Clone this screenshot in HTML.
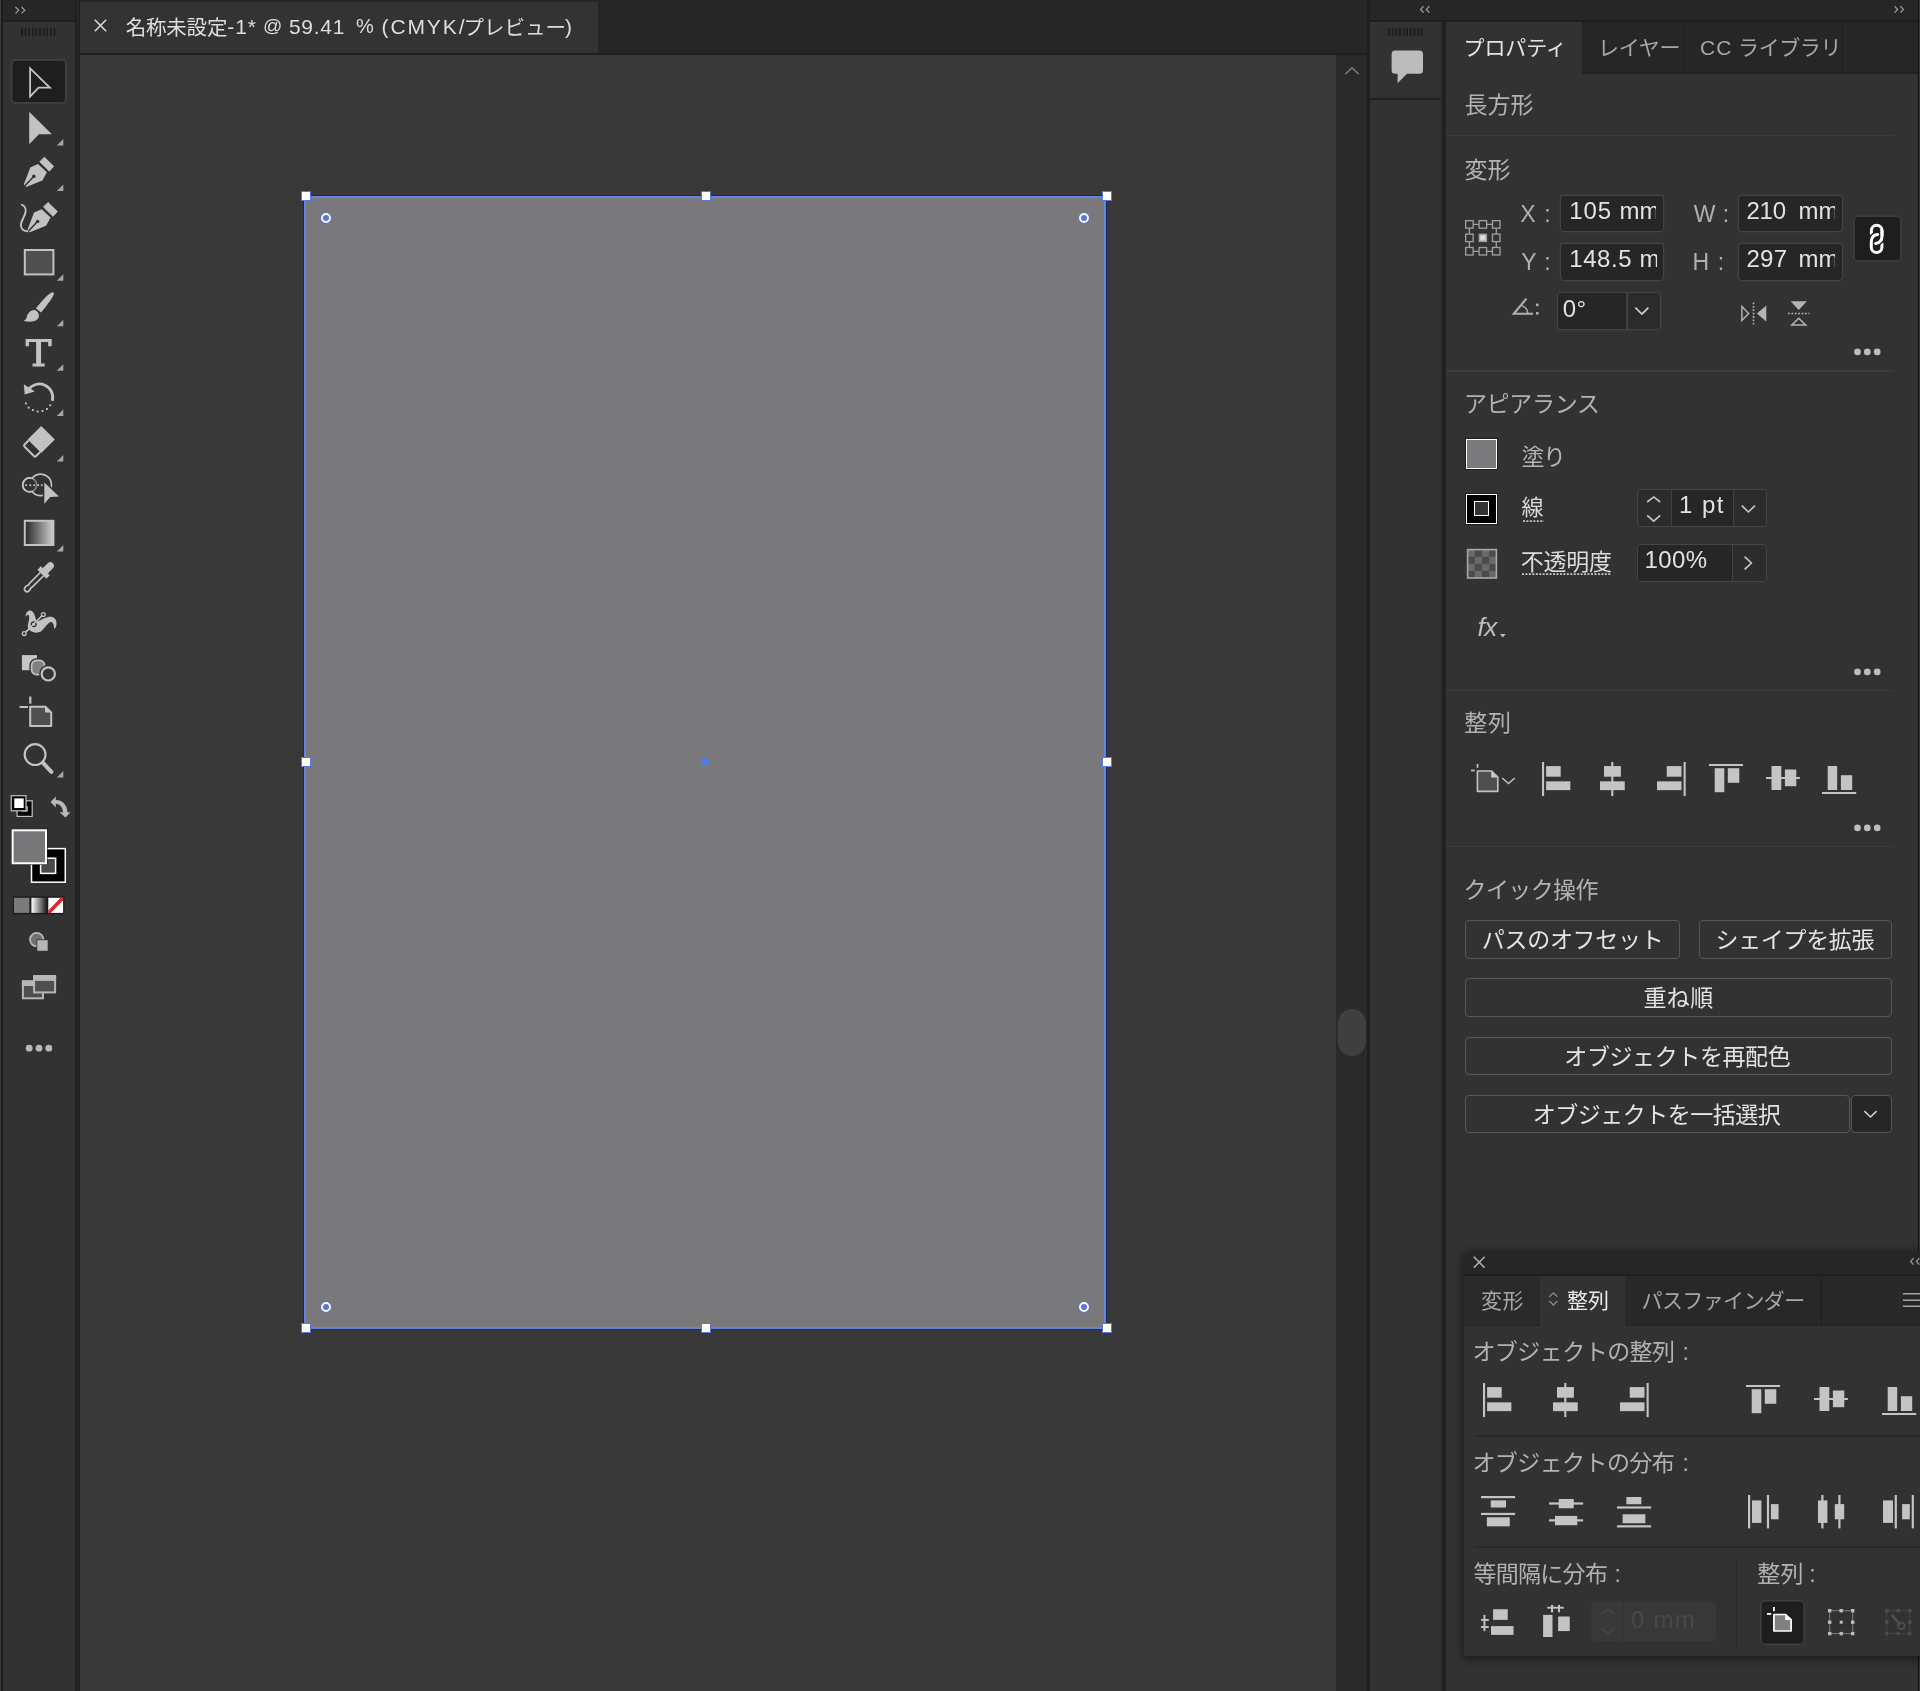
<!DOCTYPE html>
<html lang="ja">
<head>
<meta charset="utf-8">
<title>Illustrator</title>
<style>
*{box-sizing:border-box;margin:0;padding:0}
html,body{width:1920px;height:1691px;overflow:hidden;background:#323232}
body{position:relative;font-family:"Liberation Sans","Noto Sans CJK JP",sans-serif;color:#b4b4b4;-webkit-font-smoothing:antialiased}
.a{position:absolute}
.t{position:absolute;white-space:nowrap;line-height:1}
svg{position:absolute;overflow:visible}
/* ---------- frame ---------- */
#edgeL0{left:0;top:0;width:1px;height:1691px;background:#3b3b3b}
#edgeL1{left:1px;top:0;width:2px;height:1691px;background:#1d1d1d}
#tbHead{left:3px;top:0;width:72px;height:20px;background:#262626}
#tbHeadLine{left:3px;top:20px;width:72px;height:2px;background:#1f1f1f}
#tbBody{left:3px;top:22px;width:72px;height:1669px;background:#323232}
#tbBand{left:75px;top:0;width:5px;height:1691px;background:#292929}
#tbBandLine{left:75px;top:0;width:5px;height:1691px;background:linear-gradient(90deg,#212121 0 1.7px,#2a2a2a 1.7px 3.3px,#222 3.3px 5px)}
#docBar{left:80px;top:0;width:1287px;height:53px;background:#262626}
#docTab{left:80px;top:2px;width:518px;height:51px;background:#333333}
#docBarLine{left:80px;top:53px;width:1287px;height:2px;background:#202020}
#canvas{left:80px;top:55px;width:1256px;height:1636px;background:#383838}
#vscroll{left:1336px;top:55px;width:31px;height:1636px;background:#2a2a2a}
#vthumb{left:1338px;top:1009px;width:28px;height:47px;border-radius:14px;background:#3f3f3f}
#sepR{left:1367px;top:0;width:3px;height:1691px;background:#1f1f1f}
#rHead{left:1370px;top:0;width:548px;height:20px;background:#262626}
#rHeadLine{left:1370px;top:20px;width:548px;height:2px;background:#1f1f1f}
#dock{left:1370px;top:22px;width:71px;height:1669px;background:#323232}
#dockLine{left:1370px;top:98px;width:71px;height:2px;background:#222222}
#dockBand{left:1441px;top:22px;width:5px;height:1669px;background:#262626}
#dockBandLine{left:1443px;top:22px;width:2px;height:1669px;background:#1f1f1f}
#prop{left:1446px;top:22px;width:472px;height:1669px;background:#323232}
#propTabs{left:1446px;top:22px;width:472px;height:51px;background:#262626}
#edgeR0{left:1918px;top:0;width:1px;height:1691px;background:#121212}
#edgeR1{left:1919px;top:0;width:1px;height:1691px;background:#3b3b3b}
.dt{color:#dedede}
.hd{width:10px;height:10px;background:#fff;border:1px solid #5a78dc}
.cw{width:10px;height:10px;border-radius:50%;border:2.3px solid #f4f8ff;background:#5b76d8;box-shadow:0 0 0 1px rgba(90,115,215,.55)}
.sh{font-size:23px;color:#b2b2b2}
.lb{font-size:23px;color:#b0b0b0}
.hr{left:1446px;width:448px;height:1.6px;background:#3b3b3b}
.fld{background:#262626;border:1px solid #444;border-radius:4px;overflow:hidden;box-shadow:0 0 0 .5px #3a3a3a}
.clip{overflow:hidden}
.fv{font-size:24px;color:#e2e2e2;letter-spacing:.9px}
.more{fill:#bdbdbd}
#root{position:absolute;left:0;top:0;width:1920px;height:1691px;will-change:transform}
.dot{height:1.6px;background:repeating-linear-gradient(90deg,#bdbdbd 0 1.7px,transparent 1.7px 3.3px)}
.btn{border:1.3px solid #575757;border-radius:4px}
.bt{font-size:23px;color:#e4e4e4}
#fpShadow{left:1463.75px;top:1250.6px;width:470px;height:405.5px;border-radius:6px 0 0 0;box-shadow:0 2px 9px 1px rgba(0,0,0,.5)}
#fp{left:1463.75px;top:1250.6px;width:456.25px;height:405.5px;background:#323232;border-radius:6px 0 0 0;overflow:hidden}
.fl{font-size:23px;color:#b2b2b2}
.fhr{height:1.5px;background:#2a2a2a}
</style>
</head>
<body>
<div id="root">
<!-- frame -->
<div class="a" id="edgeL0"></div><div class="a" id="edgeL1"></div>
<div class="a" id="tbHead"></div><div class="a" id="tbHeadLine"></div><div class="a" id="tbBody"></div>
<div class="a" id="tbBand"></div><div class="a" id="tbBandLine"></div>
<div class="a" id="docBar"></div><div class="a" id="docTab"></div><div class="a" id="docBarLine"></div>
<div class="a" id="canvas"></div>
<div class="a" id="vscroll"></div><div class="a" id="vthumb"></div>
<div class="a" id="sepR"></div>
<div class="a" id="rHead"></div><div class="a" id="rHeadLine"></div>
<div class="a" id="dock"></div><div class="a" id="dockLine"></div>
<div class="a" id="dockBand"></div><div class="a" id="dockBandLine"></div>
<div class="a" id="prop"></div><div class="a" id="propTabs"></div>
<div class="a" id="edgeR0"></div><div class="a" id="edgeR1"></div>

<!-- DOC-TAB -->
<svg style="left:94px;top:19px" width="13" height="13" viewBox="0 0 13 13"><path d="M0.8 0.8L12.2 12.2M12.2 0.8L0.8 12.2" stroke="#d6d6d6" stroke-width="1.6" fill="none"/></svg>
<div class="t dt" style="left:125.7px;top:18px;font-size:20.5px;letter-spacing:-0.2px">名称未設定</div>
<div class="t dt" style="left:227.3px;top:16px;font-size:21px;letter-spacing:.85px">-1*</div>
<div class="t dt" style="left:263px;top:16px;font-size:19px">@</div>
<div class="t dt" style="left:288.9px;top:16px;font-size:21px;letter-spacing:.75px">59.41</div>
<div class="t dt" style="left:356px;top:16px;font-size:20px">%</div>
<div class="t dt" style="left:381.5px;top:16px;font-size:21px;letter-spacing:1.9px">(CMYK/</div>
<div class="t dt" style="left:463.6px;top:18px;font-size:20.5px">プレビュー</div>
<div class="t dt" style="left:565px;top:16px;font-size:21px">)</div>
<!-- ARTBOARD -->
<div class="a" style="left:303px;top:195px;width:804px;height:1135px;background:#1c2a52"></div>
<div class="a" style="left:304px;top:196px;width:802px;height:1133px;background:#6584e2"></div>
<div class="a" style="left:306px;top:198px;width:798px;height:1129px;background:#79797b"></div>
<div class="a hd" style="left:301px;top:191px"></div><div class="a hd" style="left:701px;top:191px"></div><div class="a hd" style="left:1101.5px;top:191px"></div>
<div class="a hd" style="left:301px;top:757px"></div><div class="a hd" style="left:1101.8px;top:757px"></div>
<div class="a hd" style="left:301px;top:1323px"></div><div class="a hd" style="left:701px;top:1323px"></div><div class="a hd" style="left:1101.5px;top:1323px"></div>
<div class="a cw" style="left:321px;top:213px"></div><div class="a cw" style="left:1079px;top:213px"></div>
<div class="a cw" style="left:321px;top:1302px"></div><div class="a cw" style="left:1079px;top:1302px"></div>
<div class="a" style="left:701px;top:758px;width:8px;height:8px;border-radius:50%;background:#4f7fe6"></div>
<!-- TOOLBAR -->
<svg style="left:0;top:0" width="80" height="1100" viewBox="0 0 80 1100">
<defs>
<linearGradient id="gGrad" x1="0" x2="1" y1="0" y2="0"><stop offset="0" stop-color="#262626"/><stop offset="1" stop-color="#cfcfcf"/></linearGradient>
<linearGradient id="gGrad2" x1="0" x2="1" y1="0" y2="0"><stop offset="0" stop-color="#ffffff"/><stop offset="1" stop-color="#1a1a1a"/></linearGradient>
<path id="tri" d="M0 0V-6.5L-6.5 0Z" fill="#a6a6a6"/>
<g id="pen">
<path d="M23.8 184.6L30.3 167.4L37.9 164L46.9 172.2L42.4 180.6L26.1 187.1Z" fill="#c2c2c2"/>
<path d="M24.7 186L33.7 176.4" stroke="#323232" stroke-width="1.5" fill="none"/>
<circle cx="33.9" cy="176.2" r="1.7" fill="#323232"/>
<path d="M44.3 157.3L53.6 166.3L49.4 171.1L39.8 161.8Z" fill="#c2c2c2" stroke="#c2c2c2" stroke-width="1" stroke-linejoin="round"/>
</g>
</defs>
<!-- collapse chevrons -->
<path d="M15.5 7L18.8 10.2L15.5 13.4M21.5 7L24.8 10.2L21.5 13.4" stroke="#9a9a9a" stroke-width="1.3" fill="none"/>
<!-- grip -->
<g fill="#1f1f1f"><rect x="21" y="28" width="2" height="8"/><rect x="24.6" y="28" width="2" height="8"/><rect x="28.2" y="28" width="2" height="8"/><rect x="31.8" y="28" width="2" height="8"/><rect x="35.4" y="28" width="2" height="8"/><rect x="39" y="28" width="2" height="8"/><rect x="42.6" y="28" width="2" height="8"/><rect x="46.2" y="28" width="2" height="8"/><rect x="49.8" y="28" width="2" height="8"/><rect x="53.4" y="28" width="2" height="8"/></g>
<!-- selected tool box -->
<rect x="11.5" y="60" width="54.5" height="43" rx="4" fill="#1e1e1e" stroke="#3e3e3e" stroke-width="2"/>
<!-- selection tool -->
<path d="M30.1 68.4L49.8 87.6L38.6 87.6L30.1 96.4Z" fill="none" stroke="#c4c4c4" stroke-width="1.8" stroke-linejoin="miter"/>
<!-- direct selection -->
<path d="M29.2 111.7L51.9 134.2L39 134.2L29.2 144.3Z" fill="#c2c2c2"/>
<use href="#tri" x="63.3" y="145.4"/>
<!-- pen -->
<use href="#pen"/>
<use href="#tri" x="63.3" y="191"/>
<!-- curvature -->
<use href="#pen" x="3.7" y="45.2"/>
<path d="M21.9 204.8C24 205.5 26.2 208 25.6 212C24.8 217 20.5 221 20.9 225.5C21.3 229.5 24.5 231 27.3 231.3" fill="none" stroke="#c2c2c2" stroke-width="1.9" stroke-linecap="round"/>
<!-- rectangle -->
<rect x="24.8" y="250" width="28.6" height="24.4" fill="#4f4f4f" stroke="#c2c2c2" stroke-width="2"/>
<use href="#tri" x="63.3" y="280.7"/>
<!-- brush -->
<path d="M53.3 292.2C55 293.4 52.8 298.4 41 312.5L35.9 308.3C44.3 297.3 51.1 291.7 53.3 292.2Z" fill="#c2c2c2"/>
<path d="M34.8 309.9C37.6 310.8 39.8 314.2 38.7 317.5C37 321.5 30.3 322.6 23.8 320.9C27.5 318.7 26.3 315.8 28.6 313C30.3 310.8 32.5 309.7 34.8 309.9Z" fill="#c2c2c2"/>
<use href="#tri" x="63.3" y="326.3"/>
<!-- type -->
<text x="38.7" y="365.7" text-anchor="middle" font-family="'DejaVu Serif','Liberation Serif',serif" font-size="36.4" fill="#c2c2c2" stroke="#c2c2c2" stroke-width="1" transform="translate(38.7 0) scale(1.06 1) translate(-38.7 0)" style="text-rendering:geometricPrecision">T</text>
<use href="#tri" x="63.3" y="370.7"/>
<!-- rotate -->
<path d="M28.3 389.8A13.4 13.4 0 0 1 52.3 400.8" fill="none" stroke="#c2c2c2" stroke-width="2.8"/>
<path d="M23.8 384.2L24.7 394.6L34.8 391.5Z" fill="#c2c2c2"/>
<g fill="#c2c2c2"><rect x="24.9" y="402.4" width="1.9" height="1.9"/><rect x="27.7" y="406.6" width="1.9" height="1.9"/><rect x="31.9" y="409.1" width="1.9" height="1.9"/><rect x="36.7" y="410.6" width="1.9" height="1.9"/><rect x="41.5" y="410" width="1.9" height="1.9"/><rect x="46" y="408" width="1.9" height="1.9"/><rect x="49.3" y="404.4" width="1.9" height="1.9"/></g>
<use href="#tri" x="63.3" y="416"/>
<!-- eraser -->
<g transform="translate(41.25 439.5) rotate(45)">
<rect x="-9.6" y="-9.6" width="19.2" height="19.2" fill="#c2c2c2"/>
<path d="M-8.3 9.6V15.3A1.6 1.6 0 0 0 -6.7 16.9H6.5A1.6 1.6 0 0 0 8.1 15.3V9.6" fill="none" stroke="#c2c2c2" stroke-width="2"/>
</g>
<use href="#tri" x="63.3" y="461.6"/>
<!-- shape builder -->
<circle cx="29.7" cy="484.9" r="7" fill="none" stroke="#808080" stroke-width="1.7"/>
<path d="M32.1 478.3A10.8 10.8 0 1 1 32.1 491.5A7 7 0 1 1 32.1 478.3Z" fill="none" stroke="#c2c2c2" stroke-width="1.7"/>
<g fill="#c2c2c2"><rect x="25.2" y="484.3" width="1.8" height="1.8"/><rect x="29.4" y="484.3" width="1.8" height="1.8"/><rect x="33.3" y="484.3" width="1.8" height="1.8"/><rect x="37.2" y="484.3" width="1.8" height="1.8"/><rect x="40.9" y="484.3" width="1.8" height="1.8"/></g>
<path d="M44.3 482.4L58.9 496.6L50.3 497L44.3 503.7Z" fill="#c2c2c2" stroke="#323232" stroke-width="3" paint-order="stroke" stroke-linejoin="miter"/>
<!-- gradient -->
<rect x="24.8" y="520.8" width="28.6" height="24.2" fill="url(#gGrad)" stroke="#c2c2c2" stroke-width="2"/>
<use href="#tri" x="63.3" y="551.6"/>
<!-- eyedropper -->
<g transform="translate(24.5 591.6) rotate(-45)">
<path d="M24.7 -2.3L10 -2.3C9 -2.3 8.5 -1.9 7.6 -1.9C6.5 -1.9 6 -2.7 3.7 -2.7A2.7 2.7 0 0 0 3.7 2.7C6 2.7 6.5 1.9 7.6 1.9C8.5 1.9 9 2.3 10 2.3L24.7 2.3" fill="none" stroke="#c2c2c2" stroke-width="1.7"/>
<rect x="24.6" y="-6.3" width="4.8" height="12.6" fill="#c2c2c2"/>
<path d="M29 -3.6H36.5A3.6 3.6 0 0 1 36.5 3.6H29Z" fill="#c2c2c2"/>
</g>
<!-- width tool -->
<path d="M25.5 616.5C25.8 612 28.6 609.7 31.4 610.8C34.2 612.2 35.3 617 36.5 621.5C39.5 621 45.5 616.9 48.5 616.9C53.5 616 56.3 619 56.5 623C56.6 625.5 55.9 627.5 55 628.6L54 628.4C54.2 625 53 622 51 622C48.5 622 46 626.5 41 631.5C36 634 30.5 632 28.6 629C26.5 625.5 29.5 621 29.2 617C28.9 614.5 27.3 614.3 26.5 615.8Z" fill="#c2c2c2"/>
<path d="M24.4 633.4L43.2 614.6" stroke="#c2c2c2" stroke-width="1.3" fill="none"/>
<circle cx="33.7" cy="624.2" r="2.4" fill="none" stroke="#323232" stroke-width="1.3"/>
<path d="M25.6 632.2L42 615.8" stroke="#c2c2c2" stroke-width="1.3" fill="none"/>
<circle cx="24.2" cy="633.6" r="1.9" fill="#323232" stroke="#c2c2c2" stroke-width="1.3"/>
<circle cx="43.3" cy="614.5" r="1.9" fill="#323232" stroke="#c2c2c2" stroke-width="1.3"/>
<!-- blend -->
<rect x="21.9" y="655.1" width="15.1" height="15.1" fill="#c6c6c6"/>
<rect x="31.6" y="660.4" width="13" height="14.2" rx="5" fill="#808080" stroke="#323232" stroke-width="4.4"/>
<rect x="31.6" y="660.4" width="13" height="14.2" rx="5" fill="#808080" stroke="#c2c2c2" stroke-width="1.7"/>
<circle cx="48.3" cy="673.9" r="6.6" fill="#323232" stroke="#323232" stroke-width="5"/>
<circle cx="48.3" cy="673.9" r="6.6" fill="#353535" stroke="#c2c2c2" stroke-width="2.2"/>
<!-- artboard -->
<rect x="29.2" y="696.5" width="2.2" height="7.2" fill="#c2c2c2"/><rect x="19.6" y="706" width="8.4" height="2" fill="#c2c2c2"/>
<path d="M30.2 706.7H45.4L51.2 712.4V726.1H30.2Z" fill="#4f4f4f" stroke="#c2c2c2" stroke-width="2" stroke-linejoin="round"/>
<path d="M45 706.7V712.6H51.2Z" fill="#c6c6c6"/>
<!-- zoom -->
<circle cx="35.1" cy="754.6" r="10.4" fill="none" stroke="#c2c2c2" stroke-width="2.2"/>
<path d="M43 762.8L51.4 771.8" stroke="#c2c2c2" stroke-width="4" stroke-linecap="round" fill="none"/>
<use href="#tri" x="63.3" y="777.5"/>
<!-- default fill/stroke -->
<rect x="17.1" y="800.8" width="15.1" height="15.6" fill="#000" stroke="#c2c2c2" stroke-width="1.2"/>
<rect x="22.2" y="806.8" width="5" height="4.2" fill="none" stroke="#c2c2c2" stroke-width="1.2"/>
<rect x="11.2" y="795.7" width="14.8" height="15.1" fill="#000" stroke="#c2c2c2" stroke-width="1.2"/>
<rect x="14.3" y="798.4" width="9.4" height="9.6" fill="#fff"/>
<!-- swap -->
<path d="M50.5 801.9L55.8 796.5V800.1C62 800.1 67.2 804.5 67.4 812.2H70.4L65.5 817.6L59.5 812.2H63C62.8 807.5 60 804 55.8 803.8V807.5Z" fill="#b8b8b8"/>
<!-- stroke swatch -->
<rect x="31.5" y="848.6" width="33.8" height="33.6" fill="#000" stroke="#fff" stroke-width="1.5"/>
<rect x="40.6" y="858.2" width="15" height="15.2" fill="#4a4a4a" stroke="#fff" stroke-width="1.5"/>
<!-- fill swatch -->
<rect x="11.2" y="828.9" width="36.2" height="35.8" fill="#1a1a1a"/>
<rect x="12.6" y="830.3" width="33.4" height="33" fill="#777779" stroke="#fff" stroke-width="2"/>
<!-- color / gradient / none -->
<rect x="12.9" y="896.3" width="51.4" height="18" fill="#1c1c1c"/>
<rect x="14" y="897.8" width="15.4" height="15.1" fill="#7b7b7b"/>
<rect x="31.4" y="897.8" width="15.5" height="15.1" fill="url(#gGrad2)"/>
<rect x="48.3" y="897.8" width="14.8" height="15.1" fill="#fff"/>
<path d="M48.3 912.9V910.4L60.6 897.8H63.1V900.3L50.8 912.9Z" fill="#e0222c"/>
<!-- draw mode -->
<circle cx="36.7" cy="939.6" r="6.7" fill="#707070" stroke="#b8b8b8" stroke-width="1.8"/>
<rect x="37.3" y="940.2" width="10.4" height="10.6" fill="#b6b6b6" stroke="#323232" stroke-width="1.6" paint-order="stroke"/>
<!-- screen mode -->
<rect x="22.9" y="981.4" width="20.1" height="16.9" fill="#4f4f4f" stroke="#b6b6b6" stroke-width="2"/><rect x="21.9" y="980.4" width="22.1" height="5.6" fill="#b6b6b6"/>
<rect x="34.1" y="976.1" width="21" height="16.3" fill="#4f4f4f" stroke="#b6b6b6" stroke-width="2"/><rect x="33.1" y="975.1" width="23" height="5.8" fill="#b6b6b6"/>
<!-- more -->
<circle cx="29.2" cy="1048.2" r="3.4" fill="#b8b8b8"/><circle cx="39" cy="1048.2" r="3.4" fill="#b8b8b8"/><circle cx="48.8" cy="1048.2" r="3.4" fill="#b8b8b8"/>
</svg>
<!-- DOCK -->
<svg style="left:1386px;top:26px" width="40" height="12" viewBox="0 0 40 12"><g fill="#1f1f1f"><rect x="2.2" y="2" width="1.9" height="8"/><rect x="5.8" y="2" width="1.9" height="8"/><rect x="9.4" y="2" width="1.9" height="8"/><rect x="13" y="2" width="1.9" height="8"/><rect x="16.6" y="2" width="1.9" height="8"/><rect x="20.2" y="2" width="1.9" height="8"/><rect x="23.8" y="2" width="1.9" height="8"/><rect x="27.4" y="2" width="1.9" height="8"/><rect x="31" y="2" width="1.9" height="8"/><rect x="34.6" y="2" width="1.9" height="8"/></g></svg>
<svg style="left:1390px;top:49px" width="36" height="36" viewBox="0 0 36 36"><path d="M5.2 1.6H29.4A3.6 3.6 0 0 1 33 5.2V21.2A3.6 3.6 0 0 1 29.4 24.8H17L7.6 34.2V24.8H5.2A3.6 3.6 0 0 1 1.6 21.2V5.2A3.6 3.6 0 0 1 5.2 1.6Z" fill="#bcbcbc"/></svg>
<svg style="left:1344px;top:66px" width="16" height="10" viewBox="0 0 16 10"><path d="M1.2 8.2L8 1.8L14.8 8.2" fill="none" stroke="#7c7c7c" stroke-width="1.5"/></svg>
<!-- PROPERTIES -->
<div class="a" style="left:1446px;top:22px;width:136px;height:52px;background:#323232"></div>
<div class="a" style="left:1683px;top:22px;width:1px;height:50px;background:#1f1f1f"></div>
<div class="a" style="left:1842px;top:22px;width:1px;height:50px;background:#1f1f1f"></div>
<div class="a" style="left:1582px;top:72px;width:336px;height:1.5px;background:#222"></div>
<div class="t" style="left:1463.6px;top:36.7px;font-size:21px;letter-spacing:-.15px;color:#e4e4e4">プロパティ</div>
<div class="t" style="left:1597.9px;top:36.5px;font-size:21px;letter-spacing:-.23px;color:#a6a6a6">レイヤー</div>
<div class="t" style="left:1700px;top:36.5px;font-size:21px;letter-spacing:1px;color:#a6a6a6">CC</div>
<div class="t" style="left:1738.1px;top:36.5px;font-size:21px;letter-spacing:-.42px;color:#a6a6a6">ライブラリ</div>
<!-- header chevrons -->
<svg style="left:1418px;top:4px" width="16" height="12" viewBox="0 0 16 12"><path d="M5.6 2.2L2.6 5.4L5.6 8.6M11.4 2.2L8.4 5.4L11.4 8.6" stroke="#9a9a9a" stroke-width="1.3" fill="none"/></svg>
<svg style="left:1892px;top:4px" width="16" height="12" viewBox="0 0 16 12"><path d="M2.6 2.2L5.6 5.4L2.6 8.6M8.4 2.2L11.4 5.4L8.4 8.6" stroke="#9a9a9a" stroke-width="1.3" fill="none"/></svg>
<!-- section: shape -->
<div class="t sh" style="left:1464.6px;top:93.8px">長方形</div>
<div class="a hr" style="top:134.8px"></div>
<!-- section: transform -->
<div class="t sh" style="left:1464.6px;top:158.9px;letter-spacing:-.2px">変形</div>
<svg style="left:1464px;top:219px" width="38" height="38" viewBox="0 0 38 38"><g fill="none" stroke="#a2a2a2" stroke-width="1.3"><path d="M9.4 5.4H14.6M22.8 5.4H28M9.4 32.3H14.6M22.8 32.3H28M5.4 9.4V14.8M5.4 23V28.3M32.3 9.4V14.8M32.3 23V28.3"/><rect x="1.65" y="1.65" width="7.5" height="7.5"/><rect x="15.1" y="1.65" width="7.5" height="7.5"/><rect x="28.5" y="1.65" width="7.5" height="7.5"/><rect x="1.65" y="15.1" width="7.5" height="7.5"/><rect x="28.5" y="15.1" width="7.5" height="7.5"/><rect x="1.65" y="28.5" width="7.5" height="7.5"/><rect x="15.1" y="28.5" width="7.5" height="7.5"/><rect x="28.5" y="28.5" width="7.5" height="7.5"/></g><rect x="14.6" y="14.6" width="8.5" height="8.5" fill="#a2a2a2"/><rect x="16.2" y="16.2" width="5.3" height="5.3" fill="#dcdcdc"/></svg>
<div class="t lb" style="left:1520.2px;top:203px;letter-spacing:1.6px">X</div><div class="t lb" style="left:1544.3px;top:203px">:</div>
<div class="t lb" style="left:1521.2px;top:250.6px">Y</div><div class="t lb" style="left:1544.3px;top:250.6px">:</div>
<div class="t lb" style="left:1693.8px;top:203px;letter-spacing:-1.3px">W</div><div class="t lb" style="left:1722.8px;top:203px">:</div>
<div class="t lb" style="left:1692.4px;top:250.6px;letter-spacing:2px">H</div><div class="t lb" style="left:1717.8px;top:250.6px">:</div>
<div class="a fld" style="left:1560px;top:194.5px;width:104px;height:37.5px"><div class="a clip" style="left:0;top:0;width:94.5px;height:35.5px"><div class="t fv" style="left:8.2px;top:3.4px;letter-spacing:0.88px">105</div><div class="t fv" style="left:58.6px;top:3.4px;letter-spacing:0">mm</div></div></div>
<div class="a fld" style="left:1560px;top:243px;width:104px;height:37.5px"><div class="a clip" style="left:0;top:0;width:95.5px;height:35.5px"><div class="t fv" style="left:8.2px;top:3.0px;letter-spacing:0.59px">148.5</div><div class="t fv" style="left:78.6px;top:3.0px;letter-spacing:0">mm</div></div></div>
<div class="a fld" style="left:1738px;top:194.5px;width:104.5px;height:37.5px"><div class="a clip" style="left:0;top:0;width:96.0px;height:35.5px"><div class="t fv" style="left:7.5px;top:3.4px;letter-spacing:-0.25px">210</div><div class="t fv" style="left:59.4px;top:3.4px;letter-spacing:0">mm</div></div></div>
<div class="a fld" style="left:1738px;top:243px;width:104.5px;height:37.5px"><div class="a clip" style="left:0;top:0;width:96.0px;height:35.5px"><div class="t fv" style="left:7.5px;top:3.0px;letter-spacing:0.25px">297</div><div class="t fv" style="left:59.4px;top:3.0px;letter-spacing:0">mm</div></div></div>
<!-- link -->
<div class="a" style="left:1852.8px;top:214.9px;width:48.9px;height:47.1px;background:#1e1e1e;box-shadow:inset 0 0 0 2px #3a3a3a;border-radius:5px"></div>
<svg style="left:1868px;top:222px" width="18" height="34" viewBox="0 0 18 34"><g fill="none"><path d="M3.4 12.4V8.5A5.3 5.3 0 0 1 14 8.5V14" stroke="#fff" stroke-width="3" stroke-linecap="round"/><path d="M3.3 19.8C3.3 15.3 5.8 12.8 9.7 12.4" stroke="#1e1e1e" stroke-width="5.6"/><path d="M13.9 21.4V25.3A5.3 5.3 0 0 1 3.3 25.3V19.8C3.3 15.3 5.8 12.8 9.7 12.4" stroke="#fff" stroke-width="3" stroke-linecap="round"/><path d="M14 14C14 18.5 11.5 21 7.6 21.4" stroke="#1e1e1e" stroke-width="5.6"/><path d="M14 8.5V14C14 18.5 11.5 21 7.6 21.4" stroke="#fff" stroke-width="3" stroke-linecap="round"/></g></svg>
<!-- angle -->
<svg style="left:1511px;top:296px" width="32" height="22" viewBox="0 0 32 22"><path d="M15.4 2.6L2.8 17.8H22" fill="none" stroke="#b0b0b0" stroke-width="2.1" stroke-linejoin="miter"/><path d="M10.6 9.6C14.6 10.8 16.6 13.6 17 17.6" fill="none" stroke="#b0b0b0" stroke-width="1.3"/><rect x="25" y="7.6" width="2.6" height="2.6" fill="#b0b0b0"/><rect x="25" y="16" width="2.6" height="2.6" fill="#b0b0b0"/></svg>
<div class="a fld" style="left:1556.5px;top:292px;width:104px;height:38px"><div class="t fv" style="left:5.3px;top:4px;letter-spacing:.25px">0°</div><div class="a" style="left:68.5px;top:0;width:1.5px;height:36px;background:#414141"></div><div class="a" style="left:70px;top:0;width:33px;height:36px;background:#2b2b2b"></div></div>
<svg style="left:1634px;top:306px" width="16" height="11" viewBox="0 0 16 11"><path d="M1.4 1.6L7.9 8L14.4 1.6" fill="none" stroke="#d0d0d0" stroke-width="1.7"/></svg>
<!-- flips -->
<svg style="left:1739px;top:300px" width="30" height="28" viewBox="0 0 30 28"><path d="M2.9 6.6V20.4L9.6 13.5Z" fill="none" stroke="#b4b4b4" stroke-width="1.5"/><path d="M27.3 5.6V21.4L17.9 13.5Z" fill="#b4b4b4"/><path d="M14.5 2.5V24.5" stroke="#b4b4b4" stroke-width="1.6" stroke-dasharray="1.8 1.6" fill="none"/></svg>
<svg style="left:1786px;top:299px" width="26" height="30" viewBox="0 0 26 30"><path d="M4.6 2.3H20.9L12.75 11Z" fill="#b4b4b4"/><path d="M5.8 26H19.7L12.75 19.2Z" fill="none" stroke="#b4b4b4" stroke-width="1.5"/><path d="M2 14.5H23.5" stroke="#b4b4b4" stroke-width="1.6" stroke-dasharray="1.8 1.6" fill="none"/></svg>
<svg class="more" style="left:1853px;top:347px" width="30" height="10" viewBox="0 0 30 10"><circle cx="4.5" cy="4.9" r="3.3"/><circle cx="14.3" cy="4.9" r="3.3"/><circle cx="24.2" cy="4.9" r="3.3"/></svg>
<div class="a hr" style="top:370.3px"></div>
<!-- PROP2 -->
<svg width="0" height="0" style="left:0;top:0"><defs>
<g id="alL" fill="#c4c4c4"><rect x="0" y="0" width="2.1" height="34.1"/><rect x="4.1" y="4.1" width="14.6" height="10.6"/><rect x="4.1" y="19.35" width="24.25" height="8.8"/></g>
<g id="alHC" fill="#c4c4c4"><rect x="11.25" y="0" width="2.1" height="34.1"/><rect x="4" y="4.1" width="16.9" height="10.6"/><rect x="0" y="19.35" width="24.75" height="8.8"/></g>
<g id="alR" fill="#c4c4c4"><rect x="26.6" y="0" width="2.1" height="34.1"/><rect x="9.75" y="4.1" width="14.75" height="10.6"/><rect x="0" y="19.35" width="24.5" height="8.8"/></g>
<g id="alT" fill="#c4c4c4"><rect x="0" y="0" width="34.1" height="2"/><rect x="5.7" y="4.2" width="9.6" height="24"/><rect x="18.8" y="4.2" width="11.5" height="14.6"/></g>
<g id="alVC" fill="#c4c4c4"><rect x="0" y="11" width="33.9" height="2"/><rect x="5.5" y="0" width="9.8" height="24"/><rect x="18.9" y="3.5" width="11.4" height="16.7"/></g>
<g id="alB" fill="#c4c4c4"><rect x="0" y="26" width="34.2" height="2"/><rect x="5.7" y="0" width="9.5" height="24"/><rect x="18.9" y="9.2" width="11.3" height="14.8"/></g>
<g id="abIcon"><rect x="5.65" y="0" width="1.7" height="3.8" fill="#c2c2c2"/><rect x="0" y="5.65" width="3.8" height="1.7" fill="#c2c2c2"/><path d="M6.4 7H20.6L26.8 13V27.4H6.4Z" fill="#4f4f4f" stroke="#c2c2c2" stroke-width="1.6" stroke-linejoin="round"/><path d="M20.2 7V13.4H26.8Z" fill="#c8c8c8"/></g>
</defs></svg>
<!-- section: appearance -->
<div class="t sh" style="left:1463.9px;top:392.9px;letter-spacing:-.28px">アピアランス</div>
<div class="a" style="left:1465.3px;top:438.4px;width:32.4px;height:32px;background:#1c1c1c"></div>
<div class="a" style="left:1466.3px;top:439.4px;width:30.6px;height:30px;background:#7a7a7c;border:1.6px solid #fff"></div>
<div class="t" style="left:1521.5px;top:445.9px;font-size:23px;letter-spacing:-1.6px;color:#b4b4b4">塗り</div>
<div class="a" style="left:1465.3px;top:492.8px;width:32.4px;height:32px;background:#1c1c1c"></div>
<div class="a" style="left:1466.3px;top:493.8px;width:30.6px;height:30px;background:#000;border:1.6px solid #fff"></div>
<div class="a" style="left:1474.4px;top:501.3px;width:14.4px;height:15px;background:#343434;border:1.5px solid #fff"></div>
<div class="t" style="left:1521.5px;top:496.7px;font-size:22px;color:#dcdcdc">線</div>
<svg style="left:1522.5px;top:519.6px" width="22" height="3" viewBox="0 0 22 3"><path d="M0 1.2H21" stroke="#c6c6c6" stroke-width="1.8" stroke-dasharray="2 1.45" fill="none"/></svg>
<!-- stroke weight -->
<div class="a" style="left:1636.8px;top:489.2px;width:130.2px;height:38.2px;background:#2c2c2c;border:1px solid #454545;border-radius:4px;overflow:hidden"><div class="a" style="left:33px;top:0;width:63px;height:37px;background:#262626;border-left:1.3px solid #414141;border-right:1.3px solid #414141"></div><div class="t fv" style="left:41.2px;top:3.3px;letter-spacing:1.5px">1 pt</div></div>
<svg style="left:1645px;top:494px" width="18" height="30" viewBox="0 0 18 30"><path d="M2.2 8L8.7 2.9L15.2 8M2.2 21.4L8.7 27.2L15.2 21.4" fill="none" stroke="#c8c8c8" stroke-width="1.6"/></svg>
<svg style="left:1740px;top:503px" width="18" height="12" viewBox="0 0 18 12"><path d="M1.8 2.6L8.4 9L15 2.6" fill="none" stroke="#c8c8c8" stroke-width="1.6"/></svg>
<!-- opacity -->
<svg style="left:1466px;top:548px" width="32" height="32" viewBox="0 0 32 32"><rect x="1.6" y="1.6" width="28.8" height="28.4" fill="#4b4b4b"/><g fill="#6a6a6a"><rect x="1.6" y="1.6" width="7.2" height="7.1"/><rect x="16" y="1.6" width="7.2" height="7.1"/><rect x="8.8" y="8.7" width="7.2" height="7.1"/><rect x="23.2" y="8.7" width="7.2" height="7.1"/><rect x="1.6" y="15.8" width="7.2" height="7.1"/><rect x="16" y="15.8" width="7.2" height="7.1"/><rect x="8.8" y="22.9" width="7.2" height="7.1"/><rect x="23.2" y="22.9" width="7.2" height="7.1"/></g><rect x="1.6" y="1.6" width="28.8" height="28.4" fill="none" stroke="#a8a8a8" stroke-width="1.6"/></svg>
<div class="t" style="left:1520.7px;top:551.3px;font-size:23px;letter-spacing:-.23px;color:#dcdcdc">不透明度</div>
<svg style="left:1521.7px;top:573.2px" width="91" height="3" viewBox="0 0 91 3"><path d="M0 1.2H89.6" stroke="#c6c6c6" stroke-width="1.8" stroke-dasharray="2 1.45" fill="none"/></svg>
<div class="a" style="left:1636.8px;top:544.4px;width:130.2px;height:37.8px;background:#2c2c2c;border:1px solid #454545;border-radius:4px;overflow:hidden"><div class="a" style="left:0;top:0;width:95.5px;height:37px;background:#262626;border-right:1.3px solid #414141"></div><div class="t fv" style="left:6.8px;top:2.2px;letter-spacing:.4px">100%</div></div>
<svg style="left:1742px;top:555px" width="12" height="16" viewBox="0 0 12 16"><path d="M2.6 1.6L9.4 8L2.6 14.4" fill="none" stroke="#c8c8c8" stroke-width="1.6"/></svg>
<!-- fx -->
<div class="t" style="left:1477.5px;top:613.5px;font-size:26px;font-style:italic;color:#bcbcbc;letter-spacing:-.5px">fx</div>
<svg style="left:1499.6px;top:634px" width="6" height="4" viewBox="0 0 6 4"><path d="M0 0H5.6L2.8 3.4Z" fill="#bcbcbc"/></svg>
<svg class="more" style="left:1853px;top:667px" width="30" height="10" viewBox="0 0 30 10"><circle cx="4.5" cy="4.9" r="3.3"/><circle cx="14.3" cy="4.9" r="3.3"/><circle cx="24.2" cy="4.9" r="3.3"/></svg>
<div class="a hr" style="top:689.6px"></div>
<!-- section: align -->
<div class="t sh" style="left:1464.3px;top:712.1px;letter-spacing:.7px">整列</div>
<svg style="left:1470.6px;top:763.7px" width="30" height="30" viewBox="0 0 30 30"><use href="#abIcon"/></svg>
<svg style="left:1501px;top:776px" width="16" height="10" viewBox="0 0 16 10"><path d="M1.2 2L7.5 7.6L13.8 2" fill="none" stroke="#c2c2c2" stroke-width="1.5"/></svg>
<svg style="left:1541.9px;top:761.9px" width="36" height="36"><use href="#alL"/></svg>
<svg style="left:1600px;top:761.9px" width="36" height="36"><use href="#alHC"/></svg>
<svg style="left:1656.5px;top:761.9px" width="36" height="36"><use href="#alR"/></svg>
<svg style="left:1709.2px;top:763.8px" width="36" height="36"><use href="#alT"/></svg>
<svg style="left:1765.7px;top:766px" width="36" height="36"><use href="#alVC"/></svg>
<svg style="left:1822.1px;top:766px" width="36" height="36"><use href="#alB"/></svg>
<svg class="more" style="left:1853px;top:823px" width="30" height="10" viewBox="0 0 30 10"><circle cx="4.5" cy="4.9" r="3.3"/><circle cx="14.3" cy="4.9" r="3.3"/><circle cx="24.2" cy="4.9" r="3.3"/></svg>
<div class="a hr" style="top:845.6px"></div>
<!-- section: quick actions -->
<div class="t sh" style="left:1463.5px;top:878.5px;letter-spacing:-.62px">クイック操作</div>
<div class="a btn" style="left:1464.8px;top:920.2px;width:215.4px;height:38.4px"></div>
<div class="a btn" style="left:1698.7px;top:920.2px;width:193.2px;height:38.4px"></div>
<div class="a btn" style="left:1464.8px;top:978.4px;width:427.1px;height:38.4px"></div>
<div class="a btn" style="left:1464.8px;top:1036.8px;width:427.1px;height:38.4px"></div>
<div class="a btn" style="left:1464.8px;top:1095px;width:385.4px;height:38.4px"></div>
<div class="a btn" style="left:1851.3px;top:1095px;width:40.6px;height:38.4px;background:#262626"></div>
<div class="t bt" style="left:1481.7px;top:929.4px;letter-spacing:-.27px">パスのオフセット</div>
<div class="t bt" style="left:1715.5px;top:929.4px;letter-spacing:-.33px">シェイプを拡張</div>
<div class="t bt" style="left:1643.4px;top:987.3px;letter-spacing:.45px">重ね順</div>
<div class="t bt" style="left:1564.3px;top:1045.6px;letter-spacing:-.4px">オブジェクトを再配色</div>
<div class="t bt" style="left:1532.7px;top:1104px;letter-spacing:-.49px">オブジェクトを一括選択</div>
<svg style="left:1863px;top:1109px" width="16" height="11" viewBox="0 0 16 11"><path d="M1.4 2.2L7.5 8L13.6 2.2" fill="none" stroke="#d0d0d0" stroke-width="1.6"/></svg>
<!-- FLOATING -->
<svg width="0" height="0" style="left:0;top:0"><defs>
<g id="dsT" fill="#c4c4c4"><rect x="0" y="0" width="34.1" height="2.2"/><rect x="9.75" y="4.35" width="15.25" height="7.15"/><rect x="0" y="16.85" width="34.1" height="2.2"/><rect x="5.85" y="21.25" width="22.9" height="9.1"/></g>
<g id="dsVC" fill="#c4c4c4"><rect x="9.75" y="0" width="15" height="9.25"/><rect x="0" y="3.4" width="34.1" height="2.2"/><rect x="6" y="16.9" width="22.25" height="9.35"/><rect x="0" y="20.25" width="34.1" height="2.2"/></g>
<g id="dsB" fill="#c4c4c4"><rect x="9.35" y="0" width="15" height="7.25"/><rect x="0" y="9.4" width="34.1" height="2.2"/><rect x="5.6" y="17.25" width="22.75" height="9"/><rect x="0" y="28.25" width="34.1" height="2.2"/></g>
<g id="dsL" fill="#c4c4c4"><rect x="0" y="0" width="2.2" height="33.4"/><rect x="4" y="5.4" width="9.4" height="22.5"/><rect x="18.9" y="0" width="2.2" height="33.4"/><rect x="22.9" y="9.1" width="7.7" height="15.2"/></g>
<g id="dsHC" fill="#c4c4c4"><rect x="0" y="5.4" width="9.4" height="22.5"/><rect x="3.3" y="0" width="2.2" height="33.4"/><rect x="16.8" y="9.1" width="9.4" height="15.2"/><rect x="20.3" y="0" width="2.2" height="33.4"/></g>
<g id="dsR" fill="#c4c4c4"><rect x="0" y="5.4" width="10" height="22.5"/><rect x="11.7" y="0" width="2.2" height="33.4"/><rect x="19.1" y="9.1" width="7.7" height="15.2"/><rect x="28.7" y="0" width="2.2" height="33.4"/></g>
</defs></svg>
<div class="a" id="fpShadow"></div>
<div class="a" id="fp">
<div class="a" style="left:0;top:0;width:460px;height:23px;background:#262626"></div>
<div class="a" style="left:0;top:23px;width:460px;height:2px;background:#1f1f1f"></div>
<div class="a" style="left:0;top:25px;width:460px;height:49px;background:#282828"></div>
<div class="a" style="left:0;top:25px;width:76px;height:49px;background:#2a2a2a"></div>
<div class="a" style="left:76px;top:25px;width:85px;height:51px;background:#323232"></div>
<div class="a" style="left:357px;top:25px;width:1.3px;height:49px;background:#1f1f1f"></div>
<div class="a" style="left:0;top:74px;width:76px;height:1.5px;background:#222"></div>
<div class="a" style="left:161px;top:74px;width:300px;height:1.5px;background:#222"></div>
</div>
<svg style="left:1473px;top:1256px" width="13" height="13" viewBox="0 0 13 13"><path d="M0.8 0.8L11.6 11.8M11.6 0.8L0.8 11.8" stroke="#b4b4b4" stroke-width="1.5" fill="none"/></svg>
<svg style="left:1908px;top:1256px" width="12" height="12" viewBox="0 0 12 12"><path d="M5.6 2.2L2.6 5.4L5.6 8.6M11.4 2.2L8.4 5.4L11.4 8.6" stroke="#9a9a9a" stroke-width="1.3" fill="none"/></svg>
<div class="t" style="left:1480.9px;top:1289.5px;font-size:21px;letter-spacing:.6px;color:#a6a6a6">変形</div>
<svg style="left:1548px;top:1291px" width="11" height="16" viewBox="0 0 11 16"><path d="M1.4 5.8L5.4 1.8L9.4 5.8M1.4 10L5.4 14L9.4 10" fill="none" stroke="#8a8a8a" stroke-width="1.3"/></svg>
<div class="t" style="left:1567px;top:1289.5px;font-size:21px;color:#ececec">整列</div>
<div class="t" style="left:1641.5px;top:1289.5px;font-size:21px;letter-spacing:-.61px;color:#a6a6a6">パスファインダー</div>
<svg style="left:1903px;top:1292px" width="17" height="16" viewBox="0 0 17 16"><path d="M0 1.8H17M0 8.2H17M0 14.3H17" stroke="#a4a4a4" stroke-width="1.6" fill="none"/></svg>
<!-- align objects -->
<div class="t fl" style="left:1472.4px;top:1340.8px;letter-spacing:-.54px">オブジェクトの整列</div><div class="t fl" style="left:1682.6px;top:1340.8px">:</div>
<svg style="left:1483.1px;top:1383.1px" width="36" height="36"><use href="#alL"/></svg>
<svg style="left:1552.75px;top:1383.1px" width="36" height="36"><use href="#alHC"/></svg>
<svg style="left:1620.4px;top:1383.1px" width="36" height="36"><use href="#alR"/></svg>
<svg style="left:1746.1px;top:1385px" width="36" height="36"><use href="#alT"/></svg>
<svg style="left:1814.1px;top:1387.2px" width="36" height="36"><use href="#alVC"/></svg>
<svg style="left:1881.6px;top:1387.2px" width="36" height="36"><use href="#alB"/></svg>
<div class="a fhr" style="left:1474px;top:1435.3px;width:446px"></div>
<!-- distribute objects -->
<div class="t fl" style="left:1472.4px;top:1452px;letter-spacing:-.58px">オブジェクトの分布</div><div class="t fl" style="left:1682.6px;top:1452px">:</div>
<svg style="left:1481.25px;top:1496.25px" width="36" height="36"><use href="#dsT"/></svg>
<svg style="left:1549px;top:1498.5px" width="36" height="36"><use href="#dsVC"/></svg>
<svg style="left:1616.9px;top:1496.5px" width="36" height="36"><use href="#dsB"/></svg>
<svg style="left:1747.9px;top:1494.8px" width="36" height="36"><use href="#dsL"/></svg>
<svg style="left:1817.8px;top:1494.8px" width="36" height="36"><use href="#dsHC"/></svg>
<svg style="left:1883.1px;top:1494.8px" width="36" height="36"><use href="#dsR"/></svg>
<div class="a fhr" style="left:1474px;top:1546.4px;width:446px"></div>
<!-- distribute spacing -->
<div class="t fl" style="left:1473.4px;top:1563.1px;letter-spacing:-.7px">等間隔に分布</div><div class="t fl" style="left:1614.5px;top:1563.1px">:</div>
<svg style="left:1480px;top:1604px" width="36" height="36" viewBox="0 0 36 36"><g fill="#c4c4c4"><rect x="13.1" y="5.25" width="14.65" height="10.65"/><rect x="11" y="22.1" width="22.5" height="8.8"/><rect x="3.5" y="10.9" width="1.9" height="16.2"/><rect x="1" y="15" width="7.75" height="1.9"/><rect x="1" y="22.1" width="7.75" height="1.9"/></g></svg>
<svg style="left:1540px;top:1603px" width="36" height="36" viewBox="0 0 36 36"><g fill="#c4c4c4"><rect x="3.1" y="11.9" width="9.4" height="22.1"/><rect x="18.1" y="13.5" width="11.65" height="14.6"/><rect x="7.25" y="3.75" width="16.5" height="1.9"/><rect x="11" y="1.9" width="2.1" height="7.5"/><rect x="18.1" y="1.9" width="1.9" height="7.5"/></g></svg>
<div class="a" style="left:1590.6px;top:1601.8px;width:125.2px;height:39.3px;background:#383838;border-radius:3px"></div>
<div class="a" style="left:1623.2px;top:1601.8px;width:1.2px;height:39.3px;background:#333"></div>
<svg style="left:1600px;top:1607px" width="16" height="30" viewBox="0 0 16 30"><path d="M1.2 7.2L8 2.4L14.8 7.2M1.2 21.2L8 27L14.8 21.2" fill="none" stroke="#474747" stroke-width="1.5"/></svg>
<div class="t" style="left:1630.9px;top:1608px;font-size:24px;letter-spacing:1.28px;color:#494949">0 mm</div>
<div class="a" style="left:1736.1px;top:1558.8px;width:1.3px;height:88.6px;background:#2a2a2a"></div>
<div class="t fl" style="left:1757.3px;top:1563.1px;letter-spacing:.1px">整列</div><div class="t fl" style="left:1809.2px;top:1563.1px">:</div>
<div class="a" style="left:1759.5px;top:1599.5px;width:45.5px;height:45px;background:#1e1e1e;box-shadow:inset 0 0 0 1.6px #3f3f3f;border-radius:5px"></div>
<svg style="left:1766.7px;top:1606.7px" width="28" height="28" viewBox="0 0 28 28"><rect x="6" y="0" width="1.8" height="4.2" fill="#fff"/><rect x="0" y="6" width="4.2" height="1.8" fill="#fff"/><path d="M6.9 7.5H18.6L24.1 12.7V24H6.9Z" fill="#808080" stroke="#fff" stroke-width="1.7" stroke-linejoin="round"/><path d="M18.2 7.5V13.1H24.1Z" fill="#fff"/></svg>
<svg style="left:1827.5px;top:1609.1px" width="28" height="28" viewBox="0 0 28 28"><rect x="1.7" y="1.7" width="23" height="22.9" fill="none" stroke="#7c7c7c" stroke-width="1"/><g fill="#bcbcbc"><rect x="0" y="0" width="3.4" height="3.4"/><rect x="11.5" y="0" width="3.4" height="3.4"/><rect x="23" y="0" width="3.4" height="3.4"/><rect x="0" y="11.5" width="3.4" height="3.4"/><rect x="23" y="11.5" width="3.4" height="3.4"/><rect x="0" y="22.9" width="3.4" height="3.4"/><rect x="11.5" y="22.9" width="3.4" height="3.4"/><rect x="23" y="22.9" width="3.4" height="3.4"/><rect x="11.7" y="11.7" width="3" height="3"/></g></svg>
<svg style="left:1885.3px;top:1609.1px" width="28" height="28" viewBox="0 0 28 28"><rect x="1.7" y="1.7" width="23" height="22.9" fill="none" stroke="#444" stroke-width="1"/><g fill="#4c4c4c"><rect x="0" y="0" width="3.4" height="3.4"/><rect x="11.5" y="0" width="3.4" height="3.4"/><rect x="23" y="0" width="3.4" height="3.4"/><rect x="0" y="11.5" width="3.4" height="3.4"/><rect x="23" y="11.5" width="3.4" height="3.4"/><rect x="0" y="22.9" width="3.4" height="3.4"/><rect x="11.5" y="22.9" width="3.4" height="3.4"/><rect x="23" y="22.9" width="3.4" height="3.4"/></g><path d="M7.4 6.6L14.6 14.8" stroke="#4e4e4e" stroke-width="2.6" fill="none" stroke-linecap="round"/><path d="M8.6 10.8L10.8 8.8" stroke="#4e4e4e" stroke-width="1.6" fill="none"/><circle cx="16.3" cy="16.9" r="3.3" fill="none" stroke="#4e4e4e" stroke-width="1.8"/></svg>
</div>
</body>
</html>
